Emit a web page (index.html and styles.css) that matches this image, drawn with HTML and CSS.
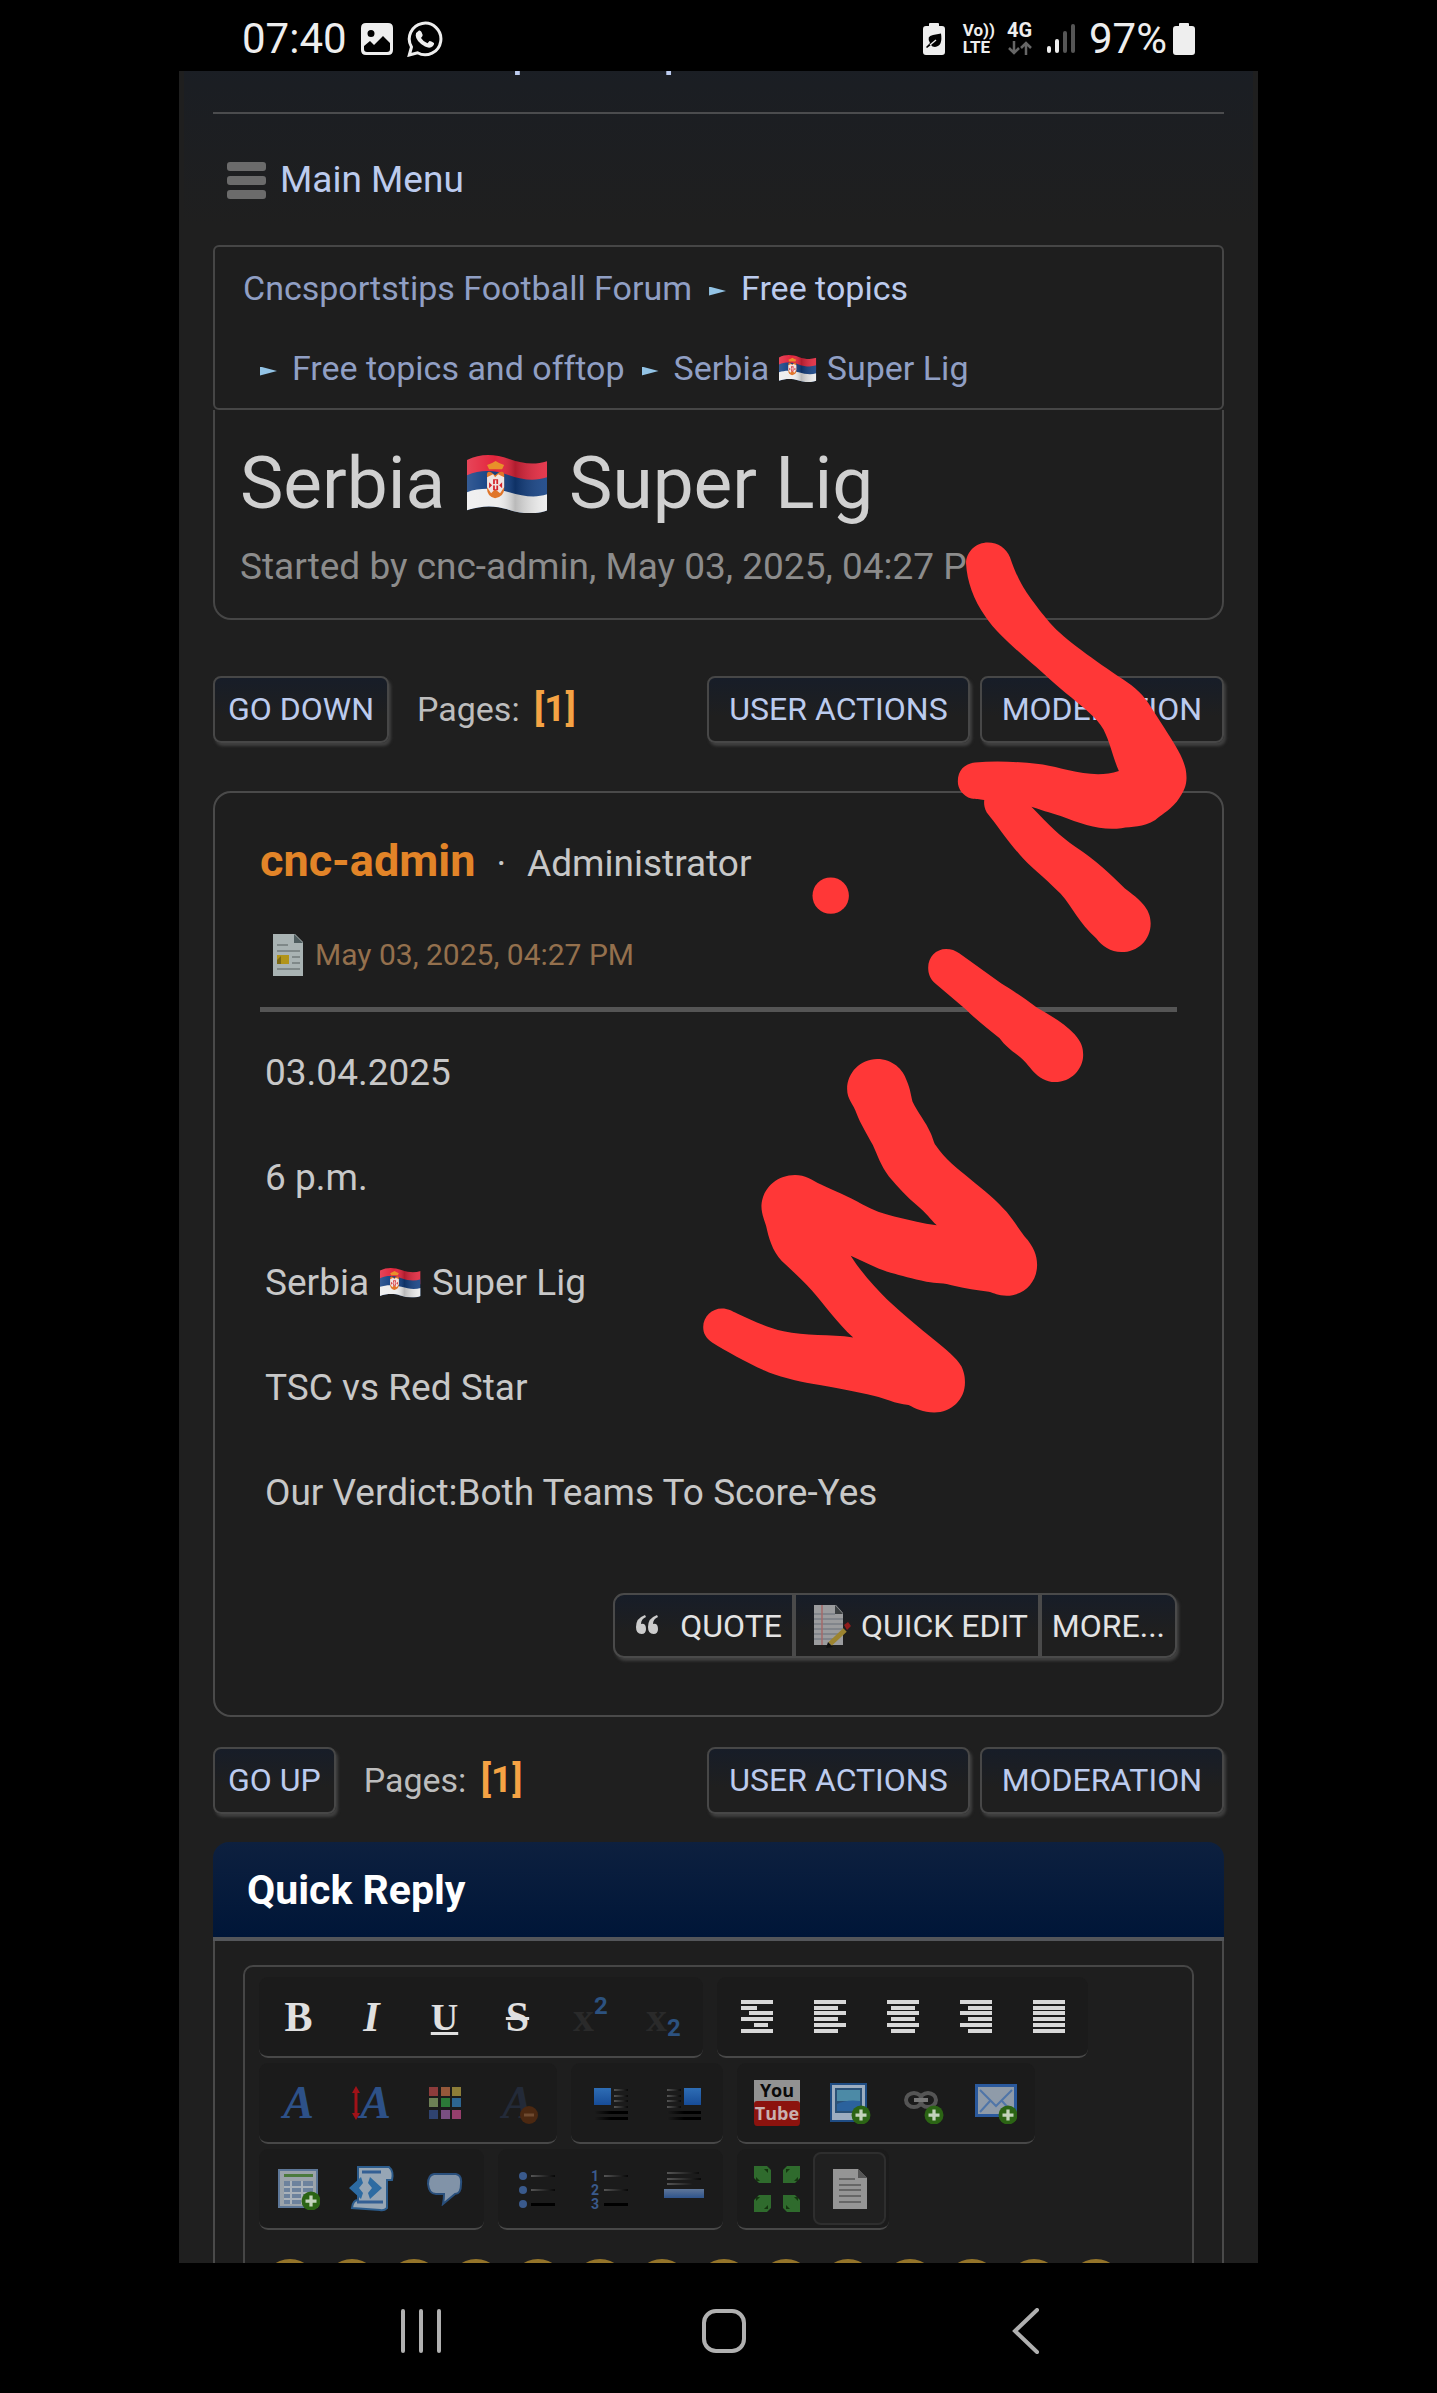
FILE: index.html
```html
<!DOCTYPE html>
<html lang="en">
<head>
  <meta charset="UTF-8" />
  <meta name="viewport" content="width=device-width, initial-scale=1.0" />
  <title>Serbia Super Lig</title>
  <link rel="stylesheet" href="styles.css">
</head>
<body>
  <!-- shared shapes -->
  <svg class="defs" aria-hidden="true">
    <defs>
      <linearGradient id="flagShade" x1="0" x2="1" y1="0" y2="0">
        <stop offset="0" stop-color="#fff" stop-opacity=".15" />
        <stop offset=".35" stop-color="#fff" stop-opacity="0" />
        <stop offset=".6" stop-color="#000" stop-opacity=".22" />
        <stop offset="1" stop-color="#fff" stop-opacity=".1" />
      </linearGradient>
      <linearGradient id="fade" x1="0" x2="1" y1="0" y2="0">
        <stop offset="0" stop-color="#555" />
        <stop offset="1" stop-color="#080808" />
      </linearGradient>
      <linearGradient id="fadeIn" x1="0" x2="1" y1="0" y2="0">
        <stop offset="0" stop-color="#1c1c1c" />
        <stop offset=".5" stop-color="#000" />
      </linearGradient>
      <linearGradient id="blueA" x1="0" x2="0" y1="0" y2="1">
        <stop offset="0" stop-color="#5f7698" />
        <stop offset="1" stop-color="#2f548c" />
      </linearGradient>
      <linearGradient id="sky" x1="0" x2="0" y1="0" y2="1">
        <stop offset="0" stop-color="#2e6db5" />
        <stop offset="1" stop-color="#174c97" />
      </linearGradient>
      <symbol id="flag" viewBox="0 0 80 58">
        <clipPath id="wave"><path d="M0 5C14-2 28-1 42 4S68 10 80 6V55C66 60 52 58 40 54S14 50 0 55Z" /></clipPath>
        <g clip-path="url(#wave)">
          <path fill="#e3253c" d="M0-4H80V32H0Z" />
          <path fill="#123f82" d="M0 20C14 14 28 15 42 20S68 26 80 22V60H0Z" />
          <path fill="#eee" d="M0 37C14 32 28 33 42 37S68 43 80 39V60H0Z" />
          <path fill="url(#flagShade)" d="M0 0H80V60H0Z" />
        </g>
        <path fill="#e0762a" d="M20 22Q19 15 24 17L28 20L32 17Q38 15 37 22V34Q37 41 28 43Q20 41 20 34Z" />
        <path fill="#f0e4e2" d="M20 22L26 19L28 22L31 19L37 22V32L33 38L28 34L24 38L20 32Z" />
        <path fill="#d5242b" d="M26 24H31V35H26ZM22 27L25 30L22 33ZM35 27L32 30L35 33Z" />
        <path fill="none" stroke="#f0e4e2" stroke-width="1.5" d="M28.500 25V34M26 29.500H31" />
        <path fill="#e8902a" d="M22 14L20 10L25 8L28.500 6L32 8L37 10L35 14Z" />
      </symbol>
      <symbol id="plus" viewBox="0 0 8 8">
        <circle cx="4" cy="4" r="3.8" fill="#2b6414" />
        <path stroke="#c3d3bb" stroke-width="1.3" d="M4 1.8v4.4M1.8 4h4.4" />
      </symbol>
    </defs>
  </svg>

  <div class="phone">
    <div class="status-bar">
      <div class="status-left">
        <span class="clock">07:40</span>
        <svg class="icon-photo" viewBox="0 0 32 32" aria-hidden="true">
          <path fill="#eee" fill-rule="evenodd" d="M5 0H27Q32 0 32 5V27Q32 32 27 32H5Q0 32 0 27V5Q0 0 5 0ZM10 7a3.500 3.500 0 1 0 0 7a3.500 3.500 0 1 0 0-7ZM3 26Q3 29 6 29H26Q29 29 29 26V20L22 13L13 22L9 18L3 23Z" />
        </svg>
        <svg class="icon-whatsapp" viewBox="0 0 36 36" aria-hidden="true">
          <path fill="none" stroke="#eee" stroke-width="3" d="M2.300 34L4.500 26A15.800 15.800 0 1 1 10.500 31.800Z" />
          <path fill="#eee" d="M12 9.500Q13.500 9 14.500 11L15.700 14Q15.800 15 14 17Q16.500 21 20.500 22.300L22.500 20Q23.500 19.700 27 22Q27.500 23 26 25Q23 28 18 25.500Q9 20.500 8.700 14.500Q9 11 12 9.500Z" />
        </svg>
      </div>
      <div class="status-right">
        <svg class="icon-battery" viewBox="0 0 22 32" aria-hidden="true">
          <path fill="#eee" d="M6 3V1Q6 0 7 0H15Q16 0 16 1V3H19Q22 3 22 6V29Q22 32 19 32H3Q0 32 0 29V6Q0 3 3 3Z" />
          <path fill="#000" d="M3 24L7 20Q3 13 10 12L18 10.500Q20 23 12 24Q9 24 8 22L4 25Z" />
          <path stroke="#eee" stroke-width="1.300" fill="none" d="M7 22L13 17" />
        </svg>
        <span class="net"><b>Vo))</b><b>LTE</b></span>
        <span class="net net-4g">
          <b>4G</b>
          <svg viewBox="0 0 26 14" aria-hidden="true"><path fill="none" stroke="#666" stroke-width="2.500" d="M7 0V12M2 7L7 12L12 7M19 14V2M14 7L19 2L24 7" /></svg>
        </span>
        <svg class="icon-signal" viewBox="0 0 28 30" aria-hidden="true">
          <path stroke="#eee" stroke-width="4" stroke-linecap="round" d="M2 24V27M10 17V27" />
          <path stroke="#555" stroke-width="4" stroke-linecap="round" d="M18 9V27M26 2V27" />
        </svg>
        <span class="percent">97%</span>
        <svg class="icon-battery" viewBox="0 0 22 32" aria-hidden="true">
          <path fill="#eee" d="M6 3V1Q6 0 7 0H15Q16 0 16 1V3H19Q22 3 22 6V29Q22 32 19 32H3Q0 32 0 29V6Q0 3 3 3Z" />
        </svg>
      </div>
    </div>

    <main class="webview">
      <div class="wrapper">
        <header class="site-header">
          <h1>Cncsportstips Football Forum</h1>
        </header>

        <a class="main-menu" href="#menu">
          <span class="burger"><i></i><i></i><i></i></span>
          Main Menu
        </a>

        <ul class="breadcrumb">
          <li><a href="#">Cncsportstips Football Forum</a></li>
          <li class="bright"><a href="#">Free topics</a></li>
          <li><a href="#">Free topics and offtop</a></li>
          <li><a href="#">Serbia <svg class="flag" role="img" aria-label="Serbia flag"><use href="#flag" /></svg> Super Lig</a></li>
        </ul>

        <section class="topic-head">
          <h2>Serbia <svg class="flag" role="img" aria-label="Serbia flag"><use href="#flag" /></svg> Super Lig</h2>
          <p>Started by cnc-admin, May 03, 2025, 04:27 PM</p>
        </section>

        <div class="page-bar page-bar-top">
          <a class="button" href="#bottom">GO DOWN</a>
          <span class="pages">Pages: <strong>[1]</strong></span>
          <button class="button button-wide">USER ACTIONS</button>
          <button class="button button-wide">MODERATION</button>
        </div>

        <article class="post">
          <div class="poster">
            <a href="#">cnc-admin</a>
            <span>·</span>
            <span>Administrator</span>
          </div>
          <div class="post-date">
            <svg viewBox="0 0 30 42" aria-hidden="true">
              <path fill="#a9b3b3" d="M0 0H22L30 8V42H0Z" />
              <path fill="#4e5c5e" d="M21 0L30 9H21Z" />
              <path stroke="#7f8888" stroke-width="2" d="M4 11H15M4 17H27M19 23H27M19 29H27M4 35H27" />
              <path fill="#b29418" d="M4 21H16V30H4Z" /><path fill="#7d6a14" d="M4 26L8 22V30H4Z" />
            </svg>
            <a href="#">May 03, 2025, 04:27 PM</a>
          </div>
          <div class="post-body">
            <p>03.04.2025</p>
            <p>6 p.m.</p>
            <p>Serbia <svg class="flag" role="img" aria-label="Serbia flag"><use href="#flag" /></svg> Super Lig</p>
            <p>TSC vs Red Star</p>
            <p>Our Verdict:Both Teams To Score-Yes</p>
          </div>
          <div class="quick-buttons">
            <button>
              <svg viewBox="0 0 42 42" aria-hidden="true"><path fill="#ccc" d="M21 12Q16 14 16 19Q21 18 21 24Q21 29 16.500 29Q11 29 11 22Q11 13 20 10ZM33 12Q28 14 28 19Q33 18 33 24Q33 29 28.500 29Q23 29 23 22Q23 13 32 10Z" /></svg>
              QUOTE
            </button>
            <button>
              <svg viewBox="0 0 42 42" aria-hidden="true">
                <path fill="#9b9c9e" d="M8 0H30L37 8V40H8Z" />
                <path fill="#3c4042" d="M29 0L37 9H29Z" />
                <path stroke="#797d85" stroke-width="1.500" d="M8 9H29M8 14H37M8 19H37M8 24H37M8 29H32M8 34H28" />
                <path stroke="#a56a68" stroke-width="1.500" d="M16 0V40" />
                <path stroke="#9c8430" stroke-width="5" d="M39 25L24 39" />
                <path fill="#8f1c1c" d="M38 20L42 17L45 21L41 25Z" /><path fill="#111" d="M22 37L27 42L20 43Z" />
              </svg>
              QUICK EDIT
            </button>
            <button>MORE...</button>
          </div>
        </article>

        <div class="page-bar page-bar-bottom" id="bottom">
          <a class="button" href="#top">GO UP</a>
          <span class="pages">Pages: <strong>[1]</strong></span>
          <button class="button button-wide">USER ACTIONS</button>
          <button class="button button-wide">MODERATION</button>
        </div>

        <section class="quick-reply">
          <h3>Quick Reply</h3>
          <div class="reply-body">
            <div class="editor">
              <div class="toolbar">
                <div class="tool-row">
                  <div class="tool-group">
                    <button class="letter" title="Bold">B</button>
                    <button class="letter italic" title="Italic">I</button>
                    <button class="letter underline" title="Underline">U</button>
                    <button class="letter strike" title="Strikethrough">S</button>
                    <button class="script" title="Superscript">x<sup>2</sup></button>
                    <button class="script" title="Subscript">x<sub>2</sub></button>
                  </div>
                  <div class="tool-group">
                    <button title="Preformatted"><svg viewBox="0 0 32 34"><path stroke="#d8d8d8" stroke-width="4" d="M0 2H32M0 8H16M8 13H32M0 19H32M13 25H27M0 31H32" /></svg></button>
                    <button title="Align left"><svg viewBox="0 0 32 34"><path stroke="#d8d8d8" stroke-width="4" d="M0 2H32M0 8H24M0 13H32M0 19H24M0 25H32M0 31H24" /></svg></button>
                    <button title="Center"><svg viewBox="0 0 32 34"><path stroke="#d8d8d8" stroke-width="4" d="M0 2H32M4 8H28M0 13H32M4 19H28M0 25H32M4 31H28" /></svg></button>
                    <button title="Align right"><svg viewBox="0 0 32 34"><path stroke="#d8d8d8" stroke-width="4" d="M0 2H32M8 8H32M0 13H32M8 19H32M0 25H32M8 31H32" /></svg></button>
                    <button title="Justify"><svg viewBox="0 0 32 34"><path stroke="#d8d8d8" stroke-width="4" d="M0 2H32M0 8H32M0 13H32M0 19H32M0 25H32M0 31H32" /></svg></button>
                  </div>
                </div>

                <div class="tool-row">
                  <div class="tool-group">
                    <button class="letter font-a" title="Font name">A</button>
                    <button class="letter font-a" title="Font size"><svg class="size-arrow" viewBox="0 0 8 34"><path stroke="#a01218" stroke-width="3" d="M4 4V30" /><path fill="#a01218" d="M4 0L8 7H0ZM4 34L8 27H0Z" /></svg>A</button>
                    <button title="Font color"><svg viewBox="0 0 32 34">
                      <path fill="#8d3b3b" d="M0 1h9v9H0z" /><path fill="#95583a" d="M12 1h9v9h-9z" /><path fill="#8d7d38" d="M23 1h9v9h-9z" />
                      <path fill="#6d8055" d="M0 12h9v9H0z" /><path fill="#2b7a38" d="M12 12h9v9h-9z" /><path fill="#2d6591" d="M23 12h9v9h-9z" />
                      <path fill="#2f4370" d="M0 24h9v9H0z" /><path fill="#7a4f82" d="M12 24h9v9h-9z" /><path fill="#963f6c" d="M23 24h9v9h-9z" />
                    </svg></button>
                    <button class="letter font-a faded" title="Remove formatting">A<svg class="minus" viewBox="0 0 18 18"><circle cx="9" cy="9" r="9" fill="#4b2811" /><path stroke="#6f4a30" stroke-width="3" d="M4 9H14" /></svg></button>
                  </div>
                  <div class="tool-group">
                    <button title="Float left"><svg viewBox="0 0 34 34"><path fill="url(#sky)" d="M0 2H17V19H0Z" /><path fill="url(#fade)" d="M20 3H34V5H20ZM20 9H34V11H20ZM20 14H34V16H20ZM20 20H34V22H20Z" /><path fill="url(#fadeIn)" d="M0 25H34V28H0ZM0 31H34V34H0Z" /></svg></button>
                    <button title="Float right"><svg viewBox="0 0 34 34"><path fill="url(#sky)" d="M17 2H34V19H17Z" /><path fill="url(#fade)" d="M0 3H14V5H0ZM0 9H14V11H0ZM0 14H14V16H0ZM0 20H14V22H0Z" /><path fill="url(#fadeIn)" d="M0 25H34V28H0ZM0 31H34V34H0Z" /></svg></button>
                  </div>
                  <div class="tool-group">
                    <button title="YouTube"><svg class="big" viewBox="0 0 46 46"><path fill="#929292" d="M0 0H46V24H0Z" /><path fill="#8c130e" d="M3 21H43Q46 21 46 24V42Q46 46 43 46H3Q0 46 0 42V24Q0 21 3 21Z" /><text class="yt" x="23" y="17" fill="#0a0a0a">You</text><text class="yt" x="23" y="40" fill="#c9b0b0">Tube</text></svg></button>
                    <button title="Insert image"><svg class="mid" viewBox="0 0 42 42"><path fill="#1f4c83" d="M1 1H38V40H1Z" /><path fill="#9dadc0" d="M3 3H36V38H3Z" /><path fill="#2b5177" d="M6 6H33V31H6Z" /><path fill="#4c8aa6" d="M8 8H31V19H8Z" /><path fill="#2b629d" d="M8 22Q18 17 31 19V29H8Z" /><use href="#plus" x="22" y="23" width="20" height="20" /></svg></button>
                    <button title="Insert link"><svg class="mid" viewBox="0 0 42 42"><g fill="none" stroke="#555" stroke-width="4"><ellipse cx="12" cy="18" rx="8" ry="7" /><ellipse cx="26" cy="18" rx="8" ry="7" /></g><path stroke="#777" stroke-width="4" d="M12 18H26" /><use href="#plus" x="22" y="23" width="20" height="20" /></svg></button>
                    <button title="Insert email"><svg class="mid" viewBox="0 0 42 42"><path fill="#2a599d" d="M0 2H42V35H0Z" /><path fill="#8f9ba9" d="M3 5H39V32H3Z" /><path fill="none" stroke="#4f75a8" stroke-width="2" d="M5 8L21 24L37 8M5 30L15 19M37 30L27 19" /><use href="#plus" x="23" y="23" width="20" height="20" /></svg></button>
                  </div>
                </div>

                <div class="tool-row">
                  <div class="tool-group">
                    <button title="Table"><svg class="mid" viewBox="0 0 42 42"><path fill="#5d7798" d="M0 1H40V40H0Z" /><path fill="#9ba3aa" d="M2 3H38V38H2Z" /><path fill="#4c7a3d" d="M6 6H35V9H6Z" /><path fill="#6d829d" d="M6 13H35V36H6Z" /><path stroke="#aab2ba" stroke-width="2" d="M6 19H35M6 25H35M6 31H35M13 13V36M24 13V36" /><use href="#plus" x="23" y="23" width="20" height="20" /></svg></button>
                    <button title="Code"><svg class="big" viewBox="0 0 46 46"><path fill="#97a6b5" stroke="#2c5c8c" stroke-width="2" d="M9 1H40Q45 5 43 14H38V42Q35 45 31 44L3 42Q4 34 9 34Z" /><path stroke="#345f94" stroke-width="3" d="M8 36H34M13 6H32" /><path fill="#2d6ba2" d="M0 22L12 11L14 17L10 22L14 27L12 33ZM33 22L21 11L19 17L23 22L19 27L21 33Z" /></svg></button>
                    <button title="Quote"><svg class="quote-icon" viewBox="0 0 36 34"><path fill="#8193a8" stroke="#294f7c" stroke-width="2" d="M7 2H29Q35 3 34 12Q34 22 28 22L16 32Q17 27 17 22H9Q2 22 1 12Q1 3 7 2Z" /></svg></button>
                  </div>
                  <div class="tool-group">
                    <button title="Bullet list"><svg class="mid" viewBox="0 0 42 42"><g fill="#3a5a8c"><circle cx="6" cy="8" r="4" /><circle cx="6" cy="22" r="4" /><circle cx="6" cy="36" r="4" /></g><path fill="url(#fade)" d="M14 7H38V9H14ZM14 21H38V23H14Z" /><path d="M14 35H38V38H14Z" /></svg></button>
                    <button title="Numbered list"><svg class="mid" viewBox="0 0 42 42"><g class="nums" fill="#3a5a8c"><text x="1" y="13">1</text><text x="1" y="27">2</text><text x="1" y="41">3</text></g><path fill="url(#fade)" d="M14 7H38V9H14ZM14 21H38V23H14Z" /><path d="M14 35H38V38H14Z" /></svg></button>
                    <button title="Horizontal rule"><svg class="mid" viewBox="0 0 42 42"><path fill="url(#fade)" d="M4 4H36V6H4ZM4 10H38V12H4ZM4 15H30V17H4Z" /><path fill="url(#blueA)" d="M1 21H41V30H1Z" /></svg></button>
                  </div>
                  <div class="tool-group">
                    <button title="Maximize"><svg class="big" viewBox="0 0 46 46"><path fill="#2f6b2d" d="M0 0H13L17 4V17H5L0 12ZM46 0H33L29 4V17H41L46 12ZM0 46H13L17 42V29H5L0 34ZM46 46H33L29 42V29H41L46 34Z" /><path fill="#14360f" d="M10 3h4v4zM36 3h-4v4zM2 11v4h4zM44 11v4h-4zM2 35v-4h4zM44 35v-4h-4zM10 43h4v-4zM36 43h-4v-4z" /></svg></button>
                    <button class="active" title="View source"><svg class="source-icon" viewBox="0 0 34 40"><path fill="#959595" d="M0 0H25L34 9V40H0Z" /><path fill="#555" d="M25 0L34 9H25Z" /><path stroke="#666" stroke-width="2" d="M6 10H22M6 16H28M6 21H28M6 27H28M6 33H28" /></svg></button>
                  </div>
                </div>
              </div>

              <div class="smileys">
                <i></i><i></i><i></i><i></i><i></i><i></i><i></i>
                <i></i><i></i><i></i><i></i><i></i><i></i><i></i>
              </div>
            </div>
          </div>
        </section>
      </div>
    </main>

    <nav class="nav-bar">
      <button aria-label="Recent apps"><svg viewBox="0 0 46 46"><path stroke="#b0b0b0" stroke-width="4" stroke-linecap="round" d="M5 3V43M23 3V43M41 3V43" /></svg></button>
      <button aria-label="Home"><svg viewBox="0 0 46 46"><rect x="3" y="3" width="40" height="40" rx="12" fill="none" stroke="#b0b0b0" stroke-width="4" /></svg></button>
      <button aria-label="Back"><svg viewBox="0 0 46 46"><path fill="none" stroke="#b0b0b0" stroke-width="4" stroke-linecap="round" d="M34 2L12 23L34 44" /></svg></button>
    </nav>

    <!-- hand drawn "win" -->
    <svg class="scribble" viewBox="179 0 1079 2393" preserveAspectRatio="xMidYMin meet" role="img" aria-label="win">
      <g fill="#ff3737">
        <g transform="translate(700 410) scale(.3571)">
          <path d="M745 430C745 395 775 371 806 371C835 371 858 388 868 412C895 490 915 515 972 587C1010 635 1090 690 1170 745C1210 770 1235 790 1255 820L1300 890C1325 930 1350 965 1360 1005C1366 1040 1362 1060 1335 1097C1310 1125 1290 1135 1275 1148C1240 1170 1210 1165 1180 1171C1120 1178 1070 1160 1010 1137C980 1128 950 1118 928 1111C980 1165 1010 1195 1050 1222C1110 1262 1150 1300 1190 1340C1230 1370 1262 1395 1262 1437C1262 1485 1225 1518 1180 1518C1150 1518 1125 1500 1110 1480C1060 1435 1045 1395 1010 1355C960 1305 920 1275 895 1245C860 1205 830 1160 803 1127C795 1113 795 1100 796 1092C780 1090 775 1090 760 1088C735 1080 722 1060 722 1040C722 1010 740 990 770 987C830 982 900 985 960 993C1020 1003 1100 1035 1173 1011C1155 970 1150 935 1130 895C1110 860 1075 835 1040 805C1000 775 960 735 930 710C885 670 830 625 800 580C765 530 748 480 745 430Z" />
          <circle cx="366" cy="1360" r="51" />
        </g>
        <g transform="translate(680 880) scale(.3571)">
          <path d="M695 245C695 215 717 193 745 193C760 193 770 197 782 205L900 290C930 308 960 328 1000 358C1040 380 1080 405 1105 432C1125 455 1129 470 1129 490C1129 530 1095 566 1050 566C1025 566 1005 553 990 537C975 520 965 505 945 490C925 475 910 463 895 443C860 415 830 392 800 362L715 290C700 277 695 262 695 245Z" />
          <path d="M468 585C468 540 505 501 552 501C595 501 625 530 635 562C645 585 646 600 651 620C665 650 690 680 700 705C708 720 710 735 716 743C740 780 780 812 810 835C850 868 890 900 915 930C935 955 950 978 965 998C990 1025 1000 1050 1000 1078C1000 1125 965 1164 915 1164C890 1164 880 1157 865 1153C830 1148 800 1145 770 1137C735 1127 720 1130 690 1125C650 1117 620 1108 590 1100C550 1088 515 1068 478 1052C505 1095 545 1140 580 1175C620 1212 670 1255 715 1290C745 1315 775 1338 788 1362C796 1380 798 1392 798 1407C798 1455 760 1491 712 1491C680 1491 660 1480 640 1470C600 1466 575 1452 545 1445C490 1432 440 1423 370 1411C330 1404 270 1390 235 1373C185 1350 130 1320 90 1295C72 1282 65 1270 65 1252C65 1222 90 1200 117 1200C135 1200 145 1207 160 1214C200 1232 240 1252 290 1264C350 1278 420 1272 485 1281C440 1240 405 1190 370 1150C340 1118 310 1090 285 1067C258 1038 248 1000 241 968C233 945 228 930 228 912C230 865 270 826 322 826C350 826 370 840 395 853C430 870 470 885 510 908C540 925 570 935 600 942C640 951 680 962 719 967C700 948 690 933 665 912C635 887 610 860 585 830C560 795 555 775 540 742C522 708 505 682 495 655C485 625 468 615 468 585Z" />
        </g>
      </g>
    </svg>
  </div>
</body>
</html>
```
FILE: styles.css
```css
* {
  margin: 0;
  padding: 0;
  box-sizing: border-box;
}

body {
  background: #000;
  color: #c8c8c8;
  font-family: Roboto, "Liberation Sans", sans-serif;
  font-size: 37px;
  line-height: 42px;
}

a {
  color: inherit;
  text-decoration: none;
}

button {
  background: none;
  border: 0;
  color: inherit;
  font: inherit;
  cursor: pointer;
}

ul {
  list-style: none;
}

.defs {
  position: absolute;
  width: 0;
  height: 0;
}

.phone {
  position: relative;
  display: flex;
  flex-direction: column;
  max-width: 1079px;
  height: 100vh;
  margin: 0 auto;
}

/* status bar */
.status-bar {
  flex: none;
  display: flex;
  justify-content: space-between;
  align-items: center;
  height: 71px;
  padding: 6px 63px 0 63px;
  color: #eee;
  font-size: 42px;
}

.status-left,
.status-right {
  display: flex;
  align-items: center;
}

.status-left {
  gap: 14px;
}

.icon-photo {
  width: 32px;
  height: 32px;
}

.icon-whatsapp {
  width: 36px;
  height: 36px;
}

.icon-battery {
  width: 22px;
  height: 32px;
}

.net {
  display: flex;
  flex-direction: column;
  margin-left: 18px;
  font-size: 17px;
  line-height: 17px;
}

.net-4g {
  margin-left: 12px;
  font-size: 20px;
}

.net-4g svg {
  width: 26px;
  height: 14px;
  margin-top: 2px;
}

.net b {
  font-weight: 700;
}

.icon-signal {
  width: 28px;
  height: 30px;
  margin-left: 14px;
}

.percent {
  margin: 0 6px 0 14px;
}

/* forum page */
.webview {
  flex: 1;
  min-height: 0;
  overflow: hidden;
  padding: 0 5px;
  background: #1f1f1f;
}

.wrapper {
  padding: 0 29px;
  background: linear-gradient(#191e28 0, #1b1e23 70px, #1f1f1f 210px);
}

.site-header {
  margin-top: -56px;
  padding: 0 0 33px 182px;
  border-bottom: 2px solid #4b4c4e;
}

.site-header h1 {
  color: #bccbee;
  font-size: 52px;
  font-weight: 400;
  line-height: 64px;
}

.main-menu {
  display: flex;
  align-items: center;
  gap: 14px;
  padding: 45px 14px 44px;
  color: #bccbee;
}

.burger {
  display: flex;
  flex-direction: column;
  gap: 5px;
  width: 39px;
}

.burger i {
  height: 9px;
  border-radius: 3px;
  background: #6b6b6b;
}

.breadcrumb {
  display: flex;
  flex-wrap: wrap;
  padding: 1px 28px 0;
  border: 2px solid #464646;
  border-radius: 6px;
  background: #1e1e1e;
  color: #909fc4;
  font-size: 34px;
  line-height: 80px;
}

.breadcrumb li {
  display: flex;
  align-items: center;
}

.breadcrumb li + li::before {
  content: "";
  width: 17px;
  height: 9px;
  margin: 6px 15px 0 17px;
  background: #93c4e6;
  clip-path: polygon(0 0, 100% 50%, 0 100%);
}

.breadcrumb .bright {
  color: #bccbee;
}

.flag {
  width: 1.1em;
  height: 0.8em;
  margin: 0 0.05em;
  vertical-align: -0.07em;
}

.topic-head {
  padding: 31px 25px 30px;
  border: 2px solid #464646;
  border-top: 0;
  border-radius: 0 0 18px 18px;
  background: #1e1e1e;
}

.topic-head h2 {
  color: #d0d0d0;
  font-size: 73px;
  font-weight: 400;
  line-height: 84px;
}

.topic-head p {
  margin-top: 21px;
  color: #8c8c8c;
}

/* buttons and page links */
.page-bar {
  display: flex;
  align-items: center;
  gap: 10px;
}

.page-bar-top {
  margin: 56px 0 48px;
}

.page-bar-bottom {
  margin: 30px 0 28px;
}

.button {
  padding: 0 13px;
  border: 2px solid #474747;
  border-radius: 8px;
  background: linear-gradient(#171d28, #1f1f1f 60%);
  box-shadow: 2px 3px 3px #404040;
  color: #bccbee;
  font-size: 32px;
  line-height: 63px;
}

.button-wide {
  padding: 0 20px;
}

.pages {
  flex: 1;
  margin-left: 18px;
  padding-bottom: 2px;
  color: #bdbdbd;
  font-size: 34px;
}

.pages strong {
  margin-left: 6px;
  color: #f5a344;
  font-size: 37px;
}

/* post */
.post {
  padding: 43px 45px 57px;
  border: 2px solid #4a4a4a;
  border-radius: 18px;
  background: #1e1e1e;
}

.poster {
  display: flex;
  align-items: baseline;
  gap: 21px;
  line-height: 50px;
}

.poster a {
  color: #e28428;
  font-size: 45px;
  font-weight: 700;
}

.post-date {
  display: flex;
  align-items: center;
  gap: 12px;
  margin-top: 45px;
  padding: 0 13px 31px;
  border-bottom: 5px solid #555;
  color: #94704d;
  font-size: 30px;
}

.post-date svg {
  width: 30px;
  height: 42px;
}

.post-body {
  display: flex;
  flex-direction: column;
  gap: 63px;
  margin-top: 40px;
  padding: 0 5px;
}

.quick-buttons {
  display: flex;
  width: fit-content;
  margin: 79px 0 0 auto;
  border: 2px solid #4a4a4a;
  border-radius: 11px;
  background: linear-gradient(#171d28, #1f1f1f 60%);
  box-shadow: 2px 3px 3px #404040;
  color: #e3e3e3;
  font-size: 32px;
}

.quick-buttons button {
  display: flex;
  align-items: center;
  gap: 13px;
  height: 61px;
  padding: 0 10px;
}

.quick-buttons button + button {
  border-left: 4px solid #4a4a4a;
}

.quick-buttons svg {
  width: 42px;
  height: 42px;
  overflow: visible;
}

/* quick reply */
.quick-reply h3 {
  padding: 2px 34px 0;
  border-bottom: 4px solid #54565a;
  border-radius: 16px 16px 0 0;
  background: linear-gradient(#0d203f, #001638);
  color: #fff;
  font-size: 41px;
  line-height: 93px;
}

.reply-body {
  padding: 24px 28px;
  border: 2px solid #4a4a4a;
  border-top: 0;
  background: #1e1e1e;
}

.editor {
  padding: 10px 14px;
  border: 2px solid #464646;
  border-radius: 10px;
}

.toolbar {
  display: flex;
  flex-direction: column;
  gap: 5px;
}

.tool-row {
  display: flex;
  gap: 14px;
}

.tool-group {
  display: flex;
  padding: 3px;
  border-bottom: 2px solid #484848;
  border-radius: 9px;
  background: #1b1b1b;
}

.tool-group button {
  display: flex;
  justify-content: center;
  align-items: center;
  width: 73px;
  height: 73px;
}

.tool-group .active {
  border: 2px solid #2e2e2e;
  border-radius: 8px;
  background: #202020;
}

.tool-group svg {
  width: 34px;
  height: 34px;
}

.tool-group .mid {
  width: 42px;
  height: 42px;
}

.tool-group .big {
  width: 46px;
  height: 46px;
  overflow: visible;
}

.tool-group .quote-icon {
  width: 36px;
  height: 34px;
}

.tool-group .source-icon {
  width: 34px;
  height: 40px;
}

.tool-group .letter {
  color: #e0e0e0;
  font-family: "Liberation Serif", serif;
  font-size: 42px;
  font-weight: 700;
}

.tool-group .italic {
  font-style: italic;
}

.tool-group .underline {
  font-size: 38px;
  text-decoration: underline;
  text-decoration-thickness: 3px;
}

.tool-group .strike {
  text-decoration: line-through;
  text-decoration-thickness: 3px;
}

.tool-group .font-a {
  color: #2d5188;
  font-size: 46px;
  font-style: italic;
}

.tool-group .faded {
  position: relative;
  color: #232a38;
}

.tool-group .size-arrow {
  width: 8px;
}

.tool-group .minus {
  position: absolute;
  right: 16px;
  bottom: 15px;
  width: 18px;
  height: 18px;
}

.tool-group .script {
  color: #2a2a2a;
  font-family: "Liberation Serif", serif;
  font-size: 42px;
  font-weight: 700;
}

.script sup,
.script sub {
  color: #2c5280;
  font-family: Roboto, sans-serif;
  font-size: 24px;
}

.script sup {
  margin-bottom: 22px;
}

.script sub {
  margin-top: 22px;
}

.yt {
  font-family: "Open Sans", sans-serif;
  font-size: 18px;
  font-weight: 700;
  text-anchor: middle;
}

.nums {
  font-size: 14px;
  font-weight: 700;
}

.smileys {
  display: flex;
  flex-wrap: wrap;
  margin-top: 29px;
}

.smileys i {
  width: 54px;
  height: 54px;
  margin: 0 4px;
  border-radius: 50%;
  background: #94742a;
}

/* system navigation */
.nav-bar {
  flex: none;
  display: flex;
  justify-content: space-between;
  align-items: center;
  height: 130px;
  padding: 6px 209px 0 219px;
  background: #000;
}

.nav-bar svg {
  display: block;
  width: 46px;
  height: 46px;
}

.scribble {
  position: absolute;
  top: 0;
  left: 0;
  width: 100%;
  pointer-events: none;
}
```
